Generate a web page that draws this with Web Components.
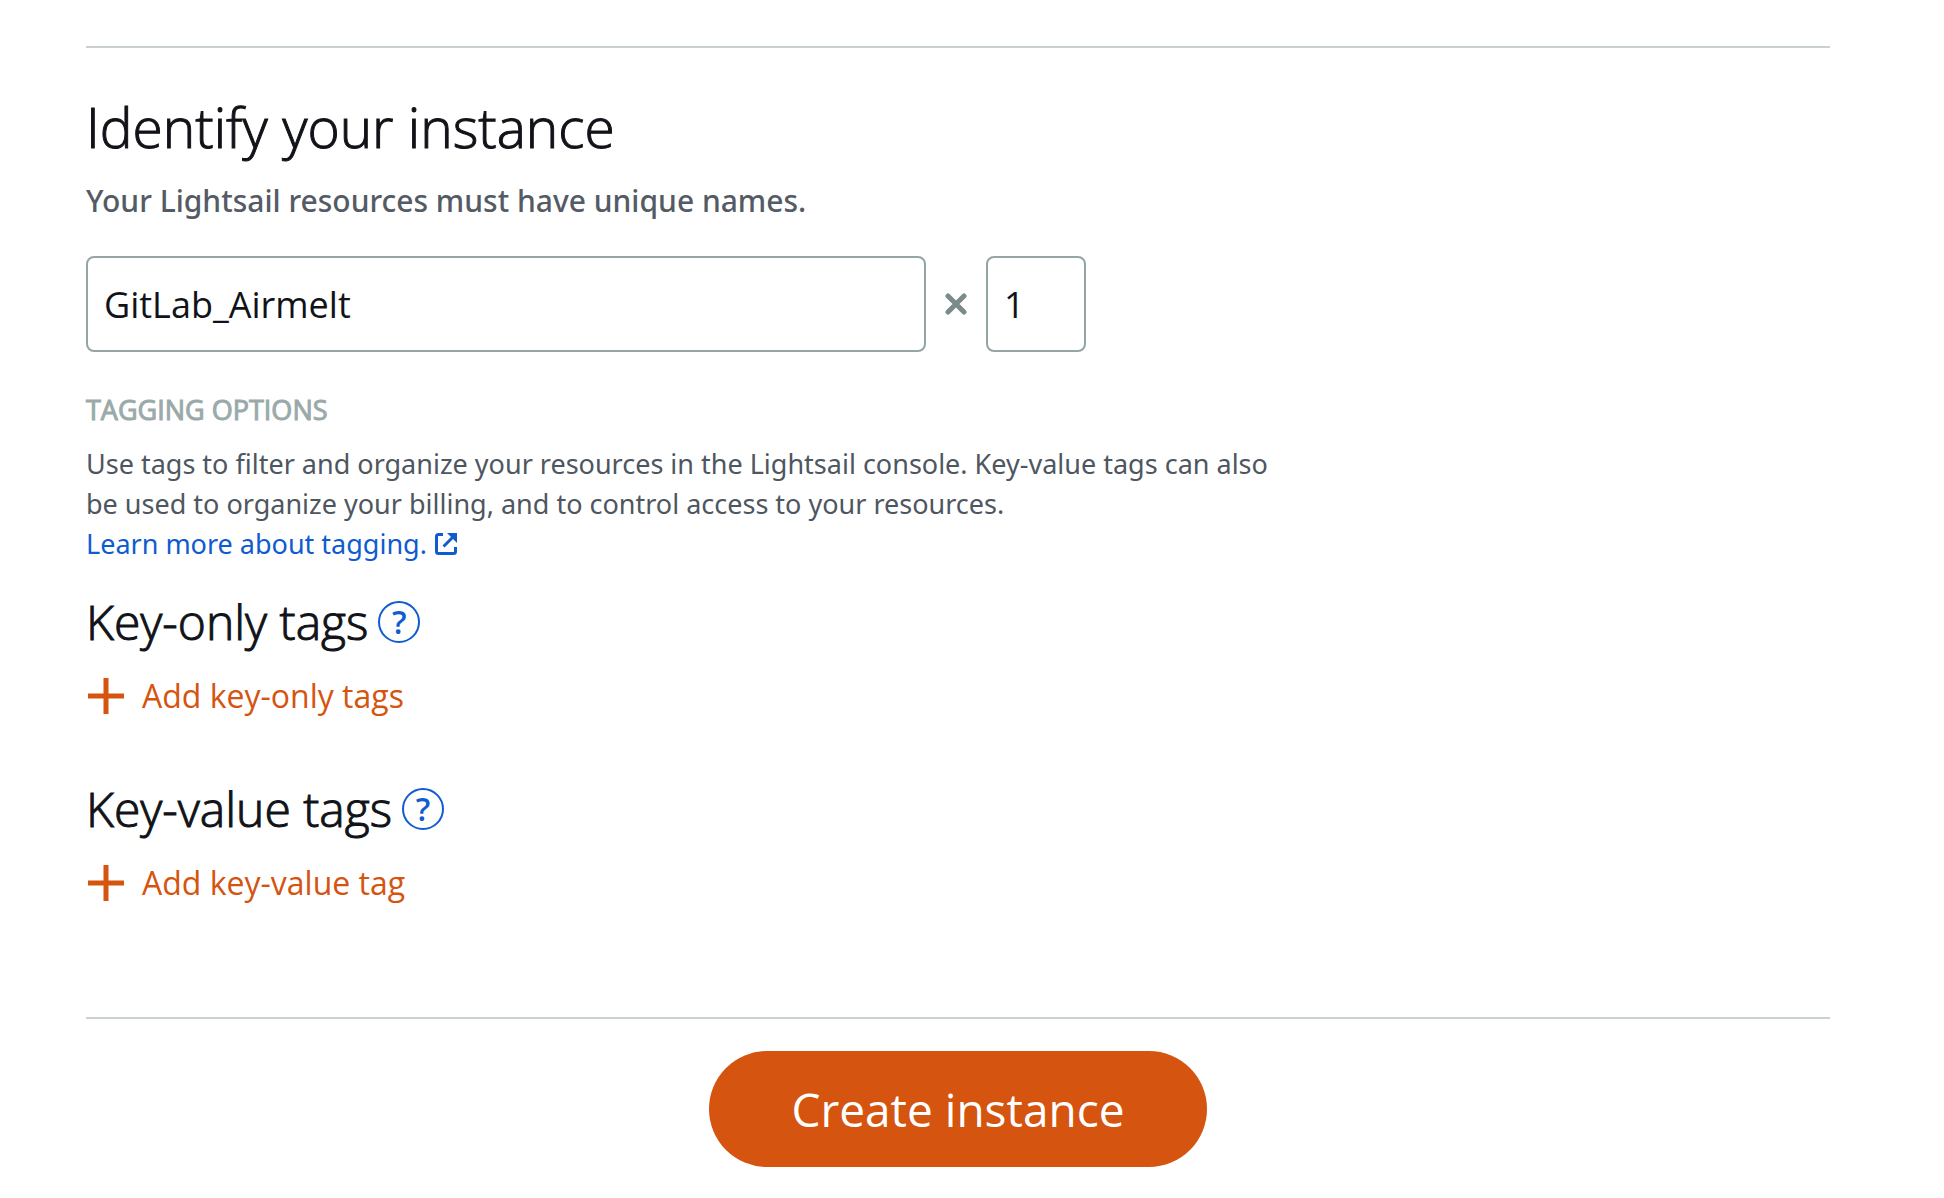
<!DOCTYPE html>
<html lang="en">
<head>
<meta charset="utf-8">
<meta name="viewport" content="width=device-width, initial-scale=1">
<title>Create instance</title>
<style>
  :root {
    --ink: #111318;
    --muted: #4e565f;
    --subtle: #545b64;
    --faint: #9aaaaa;
    --border: #95a5a6;
    --rule: #cad2d1;
    --link: #0f5bd0;
    --accent: #d45410;
    --medium: "Noto Sans", "Open Sans", sans-serif;
  }
  body {
    margin: 0;
    background: #fff;
    color: var(--ink);
    font-family: "Open Sans", "Noto Sans", sans-serif;
  }
</style>
</head>
<body>
<create-page></create-page>

<template id="create-page">
  <style>
    :host { display: block; padding: 46px 114px 31px 86px; }
    main { display: flex; flex-direction: column; border-top: 2px solid var(--rule); border-bottom: 2px solid var(--rule); padding: 45px 0 112px; }
    footer { display: flex; justify-content: center; padding-top: 32px; }
  </style>
  <main>
    <instance-identity></instance-identity>
    <tagging-info></tagging-info>
    <tag-group action="Add key-only tags">Key-only tags</tag-group>
    <tag-group action="Add key-value tag">Key-value tags</tag-group>
  </main>
  <footer><primary-button>Create instance</primary-button></footer>
</template>

<template id="instance-identity">
  <style>
    :host { display: block; }
    h2 { margin: 0; font-size: 55px; line-height: 68px; font-weight: 300; -webkit-text-stroke: 1px currentColor; }
    p { margin: 18px 0 33px; font-family: var(--medium); font-size: 30px; line-height: 44px; font-weight: 500; color: var(--subtle); }
    .row { display: flex; align-items: center; gap: 19px; }
    input {
      box-sizing: border-box; height: 96px; margin: 0; padding: 0 16px;
      border: 2px solid var(--border); border-radius: 8px; background: #fff;
      color: var(--ink); font: 400 36px "Open Sans", "Noto Sans", sans-serif;
    }
    .name { flex: 0 1 840px; min-width: 0; }
    .count { flex: 0 0 100px; width: 100px; }
    svg { flex: none; width: 22px; height: 22px; }
  </style>
  <h2>Identify your instance</h2>
  <p id="hint">Your Lightsail resources must have unique names.</p>
  <div class="row">
    <input class="name" type="text" value="GitLab_Airmelt" aria-label="Instance name" aria-describedby="hint">
    <svg viewBox="0 0 22 22" aria-hidden="true"><path d="M3 3l16 16M19 3l-16 16" stroke="#7b8a8a" stroke-width="5" stroke-linecap="round" fill="none"/></svg>
    <input class="count" type="text" inputmode="numeric" value="1" aria-label="Number of instances">
  </div>
</template>

<template id="tagging-info">
  <style>
    :host { display: block; margin-top: 38px; max-width: 1220px; font-family: var(--medium); font-weight: 400; font-size: 27px; line-height: 40px; }
    h3 { margin: 0 0 14px; font-family: "Open Sans", sans-serif; font-size: 27px; line-height: 40px; font-weight: 400; color: var(--faint); text-transform: uppercase; -webkit-text-stroke: 1px currentColor; }
    p { margin: 0; color: var(--muted); }
    a { display: inline-flex; align-items: center; gap: 8px; color: var(--link); text-decoration: none; }
    svg { width: 22px; height: 22px; }
  </style>
  <h3>Tagging options</h3>
  <p>Use tags to filter and organize your resources in the Lightsail console. Key-value tags can also<br>be used to organize your billing, and to control access to your resources.</p>
  <a href="#tagging">Learn more about tagging.<svg viewBox="0 0 22 22" aria-hidden="true" fill="none" stroke="currentColor" stroke-width="3"><path d="M8 1.5H3.5q-2 0-2 2v15q0 2 2 2h15q2 0 2-2V14M8.5 13.5L19 3"/><path d="M12 0h10v10z" fill="currentColor" stroke="none"/></svg></a>
</template>

<template id="tag-group">
  <style>
    :host { display: block; margin-top: 26px; }
    :host(:last-of-type) { margin-top: 59px; }
    .head { display: flex; align-items: center; gap: 10px; }
    h3 { margin: 0; font-size: 48px; line-height: 64px; font-weight: 300; -webkit-text-stroke: 1px currentColor; }
    button { margin: 0; border: 0; padding: 0; background: none; cursor: pointer; font-family: inherit; }
    .help { box-sizing: border-box; width: 42px; height: 42px; border: 2px solid var(--link); border-radius: 50%; color: var(--link); font-size: 32px; line-height: 38px; font-weight: 600; }
    .add { display: flex; align-items: center; gap: 18px; margin-top: 20px; padding-left: 2px; color: var(--accent); font-size: 32px; line-height: 44px; font-weight: 400; }
    .add svg { width: 36px; height: 36px; }
  </style>
  <div class="head"><h3><slot></slot></h3><button class="help" type="button" aria-label="Help">?</button></div>
  <button class="add" type="button"><svg viewBox="0 0 36 36" aria-hidden="true"><path d="M18 0v36M0 18h36" stroke="currentColor" stroke-width="5" fill="none"/></svg><span></span></button>
</template>

<template id="primary-button">
  <style>
    :host { display: block; }
    button { margin: 0; border: 0; min-width: 498px; height: 116px; padding: 0 80px; border-radius: 58px; background: var(--accent); color: #fff; font-family: inherit; font-size: 46px; line-height: 64px; font-weight: 400; cursor: pointer; }
  </style>
  <button type="button"><slot></slot></button>
</template>

<script>
  class TemplateElement extends HTMLElement {
    constructor() {
      super();
      const template = document.getElementById(this.localName);
      this.attachShadow({ mode: "open" }).append(template.content.cloneNode(true));
    }
  }
  class InstanceIdentity extends TemplateElement {}
  class TaggingInfo extends TemplateElement {}
  class TagGroup extends TemplateElement {
    connectedCallback() {
      this.shadowRoot.querySelector(".add span").textContent = this.getAttribute("action");
    }
  }
  class PrimaryButton extends TemplateElement {}
  class CreatePage extends TemplateElement {}
  customElements.define("instance-identity", InstanceIdentity);
  customElements.define("tagging-info", TaggingInfo);
  customElements.define("tag-group", TagGroup);
  customElements.define("primary-button", PrimaryButton);
  customElements.define("create-page", CreatePage);
</script>
</body>
</html>
